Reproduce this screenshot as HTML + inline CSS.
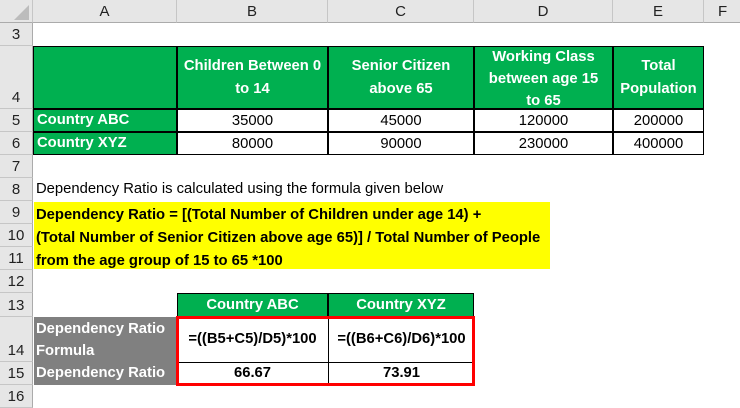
<!DOCTYPE html>
<html><head><style>
*{margin:0;padding:0;box-sizing:border-box}
body{width:740px;height:407px;overflow:hidden;background:#fff;font-family:"Liberation Sans",Arial,sans-serif;position:relative}
.a{position:absolute}
.ch{position:absolute;top:0;height:23px;background:#e6e6e6;border-right:1px solid #c6c6c6;border-bottom:1px solid #ababab;font-size:15px;color:#222;display:flex;align-items:center;justify-content:center}
.rh{position:absolute;left:0;width:33px;background:#e6e6e6;border-bottom:1px solid #c6c6c6;border-right:1px solid #ababab;font-size:15px;color:#222;display:flex;align-items:flex-end;justify-content:center;padding-bottom:2px}
.c{position:absolute;display:flex;align-items:center;justify-content:center;text-align:center;font-size:14.8px;border:1px solid #000;margin:-1px 0 0 -1px}
.g{background:#00b050;color:#fff;font-weight:bold;line-height:23px}
.t{position:absolute;font-size:14.8px;white-space:nowrap}
</style></head><body>
<div class="ch" style="left:0;width:33px"><svg width="24" height="18" style="position:absolute;left:7px;top:3px"><polygon points="22,2 22,17 7,17" fill="#bcbcbc"/></svg></div>
<div class="ch" style="left:33px;width:144px">A</div>
<div class="ch" style="left:177px;width:151px">B</div>
<div class="ch" style="left:328px;width:146px">C</div>
<div class="ch" style="left:474px;width:139px">D</div>
<div class="ch" style="left:613px;width:91px">E</div>
<div class="ch" style="left:704px;width:40px;justify-content:flex-start;padding-left:14px">F</div>

<div class="rh" style="top:23px;height:23px">3</div>
<div class="rh" style="top:46px;height:63px">4</div>
<div class="rh" style="top:109px;height:23px">5</div>
<div class="rh" style="top:132px;height:23px">6</div>
<div class="rh" style="top:155px;height:23px">7</div>
<div class="rh" style="top:178px;height:23px">8</div>
<div class="rh" style="top:201px;height:23px">9</div>
<div class="rh" style="top:224px;height:23px">10</div>
<div class="rh" style="top:247px;height:23px">11</div>
<div class="rh" style="top:270px;height:23px">12</div>
<div class="rh" style="top:293px;height:24px">13</div>
<div class="rh" style="top:317px;height:45px">14</div>
<div class="rh" style="top:362px;height:23px">15</div>
<div class="rh" style="top:385px;height:23px">16</div>

<div class="c g" style="left:34px;top:47px;width:144px;height:63px"></div>
<div class="c g" style="left:178px;top:47px;width:151px;height:63px">Children Between 0<br>to 14</div>
<div class="c g" style="left:329px;top:47px;width:146px;height:63px">Senior Citizen<br>above 65</div>
<div class="c g" style="left:475px;top:47px;width:139px;height:63px;line-height:22px;padding-top:3px">Working Class<br>between age 15<br>to 65</div>
<div class="c g" style="left:614px;top:47px;width:91px;height:63px">Total<br>Population</div>

<div class="c g" style="left:34px;top:110px;width:144px;height:23px;justify-content:flex-start;padding-left:3px">Country ABC</div>
<div class="c" style="left:178px;top:110px;width:151px;height:23px">35000</div>
<div class="c" style="left:329px;top:110px;width:146px;height:23px">45000</div>
<div class="c" style="left:475px;top:110px;width:139px;height:23px">120000</div>
<div class="c" style="left:614px;top:110px;width:91px;height:23px">200000</div>
<div class="c g" style="left:34px;top:133px;width:144px;height:23px;justify-content:flex-start;padding-left:3px">Country XYZ</div>
<div class="c" style="left:178px;top:133px;width:151px;height:23px">80000</div>
<div class="c" style="left:329px;top:133px;width:146px;height:23px">90000</div>
<div class="c" style="left:475px;top:133px;width:139px;height:23px">230000</div>
<div class="c" style="left:614px;top:133px;width:91px;height:23px">400000</div>

<div class="t" style="left:36px;top:181px">Dependency Ratio is calculated using the formula given below</div>
<div class="a" style="left:34px;top:202px;width:516px;height:67px;background:#ffff00"></div>
<div class="t" style="left:36px;top:204px;font-weight:bold;line-height:23px">Dependency Ratio = [(Total Number of Children under age 14) +<br>(Total Number of Senior Citizen above age 65)] / Total Number of People<br>from the age group of 15 to 65 *100</div>

<div class="c g" style="left:178px;top:294px;width:151px;height:24px">Country ABC</div>
<div class="c g" style="left:329px;top:294px;width:146px;height:24px">Country XYZ</div>
<div class="a" style="left:34px;top:317px;width:143px;height:68px;background:#808080"></div>
<div class="t" style="left:36px;top:318px;color:#fff;font-weight:bold;line-height:22px">Dependency Ratio<br>Formula</div>
<div class="t" style="left:36px;top:365px;color:#fff;font-weight:bold">Dependency Ratio</div>
<div class="a" style="left:177px;top:317px;width:298px;height:68px;border:1px solid #000"></div>
<div class="a" style="left:328px;top:317px;width:1px;height:68px;background:#000"></div>
<div class="a" style="left:177px;top:362px;width:298px;height:1px;background:#000"></div>
<div class="t" style="left:177px;top:331px;width:151px;text-align:center;font-weight:bold">=((B5+C5)/D5)*100</div>
<div class="t" style="left:328px;top:331px;width:147px;text-align:center;font-weight:bold">=((B6+C6)/D6)*100</div>
<div class="t" style="left:177px;top:365px;width:151px;text-align:center;font-weight:bold">66.67</div>
<div class="t" style="left:328px;top:365px;width:147px;text-align:center;font-weight:bold">73.91</div>
<div class="a" style="left:176px;top:316px;width:299px;height:70px;border:3px solid #f00"></div>
</body></html>
